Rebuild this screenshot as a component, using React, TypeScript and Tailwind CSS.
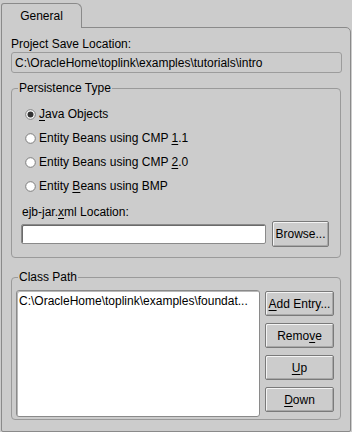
import React from "react";

const U = ({ c }: { c: string }) => (
  <span className="underline underline-offset-[2px] decoration-1">{c}</span>
);

function Radio({ checked }: { checked?: boolean }) {
  return (
    <svg width="11" height="11" viewBox="0 0 11 11" className="shrink-0">
      <circle cx="5.5" cy="5.5" r="4.8" fill="#ffffff" stroke="#7c7c7c" strokeWidth="1" />
      {checked && <circle cx="5.5" cy="5.5" r="3" fill="#333333" />}
    </svg>
  );
}

function Btn({ children, className = "" }: { children: React.ReactNode; className?: string }) {
  return (
    <div
      className={`flex items-center justify-center rounded-[2px] border border-[#7a7a7a] bg-[#cccccc] shadow-[inset_1px_1px_0_#f4f4f4,inset_-1px_-1px_0_#a8a8a8] ${className}`}
    >
      {children}
    </div>
  );
}

export default function App() {
  return (
    <div className="w-[352px] h-[432px] bg-[#cccccc] font-['Liberation_Sans',Arial,sans-serif] text-[12px] leading-[14px] text-black">
      <div className="pt-[3px] pl-[1px]">
        <div className="relative z-10 -mb-[1px] flex h-[25px] w-[81px] items-center justify-center rounded-tl-[3px] rounded-tr-[6px] border-l border-r border-t border-[#8a8a8a] bg-[#cccccc]">
          General
        </div>
        <div className="h-[405px] w-[350px] rounded-tr-[5px] rounded-b-[2px] border border-[#8a8a8a] pl-[9px]">
          <div className="pt-[9px]">Project Save Location:</div>
          <div className="mt-[1px] flex h-[21px] w-[331px] items-center whitespace-nowrap rounded-[3px] border border-[#9c9c9c] pl-[3px]">
            C:\OracleHome\toplink\examples\tutorials\intro
          </div>

          <fieldset className="mt-[8px] w-[330px] rounded-[4px] border border-[#9a9a9a]">
            <legend className="ml-[6px] px-[1px] leading-[14px]">Persistence Type</legend>
            <div className="pt-[7px]">
              <div className="flex h-[24px] items-center gap-[3px] pl-[13px]">
                <Radio checked />
                <span>
                  <U c="J" />ava Objects
                </span>
              </div>
              <div className="flex h-[24px] items-center gap-[3px] pl-[13px]">
                <Radio />
                <span>
                  Entity Beans using CMP <U c="1" />.1
                </span>
              </div>
              <div className="flex h-[24px] items-center gap-[3px] pl-[13px]">
                <Radio />
                <span>
                  Entity Beans using CMP <U c="2" />.0
                </span>
              </div>
              <div className="flex h-[24px] items-center gap-[3px] pl-[13px]">
                <Radio />
                <span>
                  Entity <U c="B" />eans using BMP
                </span>
              </div>
            </div>
            <div className="px-[9px] pb-[10px]">
              <div className="mt-[7px] pl-[1px]">
                ejb-jar.<U c="x" />ml Location:
              </div>
              <div className="mt-[2px] flex h-[26px] items-center gap-[6px]">
                <div className="h-[20px] w-[245px] rounded-[2px] border border-[#8a8a8a] bg-white shadow-[inset_1px_1px_0_#6a6a6a]" />
                <Btn className="h-[26px] w-[57px]">Browse...</Btn>
              </div>
            </div>
          </fieldset>

          <fieldset className="mt-[12px] w-[330px] rounded-[4px] border border-[#9a9a9a]">
            <legend className="ml-[6px] px-[1px] leading-[14px]">Class Path</legend>
            <div className="flex pb-[2px] pl-[4px] pt-[6px]">
              <div className="h-[127px] w-[244px] overflow-hidden whitespace-nowrap rounded-[3px] border border-[#8a8a8a] bg-white pl-[2px] pt-[3px] shadow-[inset_1px_1px_0_#b8b8b8]">
                C:\OracleHome\toplink\examples\foundat...
              </div>
              <div className="ml-[5px] mt-[1px] flex flex-col gap-[7px]">
                <Btn className="h-[25px] w-[69px]">
                  <span>
                    <U c="A" />dd Entry...
                  </span>
                </Btn>
                <Btn className="h-[25px] w-[69px]">
                  <span>
                    Remo<U c="v" />e
                  </span>
                </Btn>
                <Btn className="h-[25px] w-[69px]">
                  <span>
                    <U c="U" />p
                  </span>
                </Btn>
                <Btn className="h-[25px] w-[69px]">
                  <span>
                    <U c="D" />own
                  </span>
                </Btn>
              </div>
            </div>
          </fieldset>
        </div>
      </div>
    </div>
  );
}
